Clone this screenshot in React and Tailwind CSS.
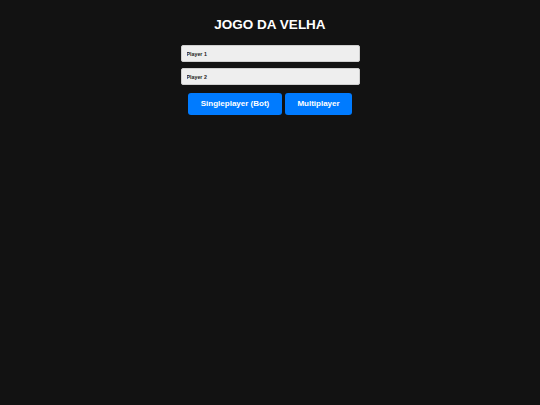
import React, { useState } from 'react';

export default function App() {
  const [p1, setP1] = useState('');
  const [p2, setP2] = useState('');

  return (
    <div className="min-h-screen bg-[#121212] font-['Liberation_Sans',Arial,sans-serif] flex flex-col items-center pt-[17px]">
      <h1 className="text-white text-[13.5px] font-bold leading-[16px] mb-[12px]">JOGO DA VELHA</h1>
      <div className="w-[179px] flex flex-col gap-[6px]">
        <input
          value={p1}
          onChange={e => setP1(e.target.value)}
          placeholder="Player 1"
          className="h-[17px] w-full rounded-[2px] border border-[#cfcfcf] bg-[#eeeeee] px-[5px] text-[5.3px] font-semibold text-[#222] placeholder:text-[#222] outline-none"
        />
        <input
          value={p2}
          onChange={e => setP2(e.target.value)}
          placeholder="Player 2"
          className="h-[17px] w-full rounded-[2px] border border-[#cfcfcf] bg-[#eeeeee] px-[5px] text-[5.3px] font-semibold text-[#222] placeholder:text-[#222] outline-none"
        />
      </div>
      <div className="flex gap-[3px] mt-[8px]">
        <button className="h-[22px] w-[94px] rounded-[3px] bg-[#007bff] text-white text-[8px] font-bold">
          Singleplayer (Bot)
        </button>
        <button className="h-[22px] w-[67px] rounded-[3px] bg-[#007bff] text-white text-[8px] font-bold">
          Multiplayer
        </button>
      </div>
    </div>
  );
}
